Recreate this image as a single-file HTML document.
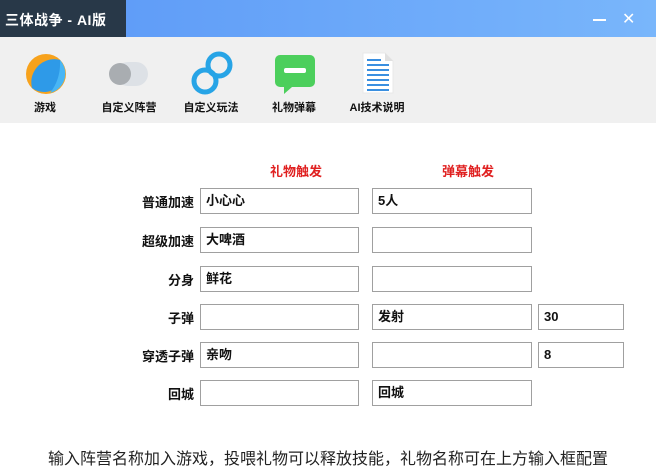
<!DOCTYPE html>
<html><head><meta charset="utf-8"><style>
*{margin:0;padding:0;box-sizing:border-box}
body{width:656px;height:475px;overflow:hidden;background:#fff;font-family:"Liberation Sans","Noto Sans CJK SC",sans-serif;position:relative;color:#111}
.tb{position:absolute;left:0;top:0;width:656px;height:37px;background:linear-gradient(90deg,#5a97f7,#79b6fb)}
.tt{position:absolute;left:0;top:0;width:126px;height:37px;background:#283848;color:#fff;font-weight:bold;font-size:14px;line-height:40px;padding-left:5px;letter-spacing:0.5px}
.tool{position:absolute;left:0;top:37px;width:656px;height:86px;background:#f0f0f0}
.ic{position:absolute;top:14px}
.lb{position:absolute;top:62px;font-size:11px;font-weight:bold;width:90px;text-align:center}
.a{position:absolute;font-size:13px;font-weight:bold}
.in{position:absolute;height:26px;border:1px solid #a0a0a0;background:#fff;font-size:13px;font-weight:bold;line-height:24px;padding-left:5px}
.red{position:absolute;color:#e02020;font-size:13px;font-weight:bold;top:161px}
</style></head><body>
<div class="tb"></div>
<div class="tt">三体战争 - AI版</div>
<div style="position:absolute;left:593px;top:19px;width:13px;height:1.5px;background:#fff"></div>
<div style="position:absolute;left:622px;top:9px;color:#fff;font-size:16px">✕</div>
<div class="tool">
<svg class="ic" style="left:25px;top:16px" width="42" height="42" viewBox="0 0 42 42"><circle cx="21" cy="21" r="20" fill="#f7a21c"/><path d="M35 7A20 20 0 0 1 7 35Q4 22 14 12Q24 4 35 7Z" fill="#2e9ae8"/><path d="M35 7A20 20 0 0 1 25 40Q36 26 35 7Z" fill="#48b6f5"/></svg>
<svg class="ic" style="left:108px;top:24px" width="42" height="26" viewBox="0 0 42 26"><rect x="8" y="1" width="32" height="24" rx="12" fill="#dde1e6"/><circle cx="12" cy="13" r="11" fill="#a9adb1"/></svg>
<svg class="ic" style="left:190px;top:14px" width="44" height="44" viewBox="0 0 44 44"><g fill="none" stroke="#27a4e6" stroke-width="5"><rect x="18" y="3" width="22" height="22" rx="11" transform="rotate(-45 29 14)"/><rect x="4" y="19" width="22" height="22" rx="11" transform="rotate(-45 15 30)"/></g></svg>
<svg class="ic" style="left:274px;top:16px" width="42" height="42" viewBox="0 0 42 42"><path d="M6 2h30a5 5 0 0 1 5 5v22a5 5 0 0 1-5 5H18l-8 7v-7H6a5 5 0 0 1-5-5V7a5 5 0 0 1 5-5z" fill="#4ccf5c"/><rect x="10" y="15" width="22" height="5" rx="2" fill="#fff"/></svg>
<svg class="ic" style="left:362px;top:15px" width="32" height="42" viewBox="0 0 32 42"><path d="M1 1h22l8 8v32H1z" fill="#fff" stroke="#e8e8e8"/><path d="M23 1v8h8" fill="#e0e0e0"/><g stroke="#3a8fe0" stroke-width="2"><path d="M5 8h14M5 13h22M5 18h22M5 23h22M5 28h22M5 33h22M5 38h22"/></g></svg>
<div class="lb" style="left:0px">游戏</div>
<div class="lb" style="left:84px">自定义阵营</div>
<div class="lb" style="left:166px">自定义玩法</div>
<div class="lb" style="left:249px">礼物弹幕</div>
<div class="lb" style="left:332px">AI技术说明</div>
</div>
<div class="red" style="left:270px">礼物触发</div>
<div class="red" style="left:442px">弹幕触发</div>

<div class="a" style="right:462px;top:192px">普通加速</div>
<div class="in" style="left:200px;top:188px;width:159px">小心心</div>
<div class="in" style="left:372px;top:188px;width:160px">5人</div>

<div class="a" style="right:462px;top:231px">超级加速</div>
<div class="in" style="left:200px;top:227px;width:159px">大啤酒</div>
<div class="in" style="left:372px;top:227px;width:160px"></div>

<div class="a" style="right:462px;top:270px">分身</div>
<div class="in" style="left:200px;top:266px;width:159px">鲜花</div>
<div class="in" style="left:372px;top:266px;width:160px"></div>

<div class="a" style="right:462px;top:308px">子弹</div>
<div class="in" style="left:200px;top:304px;width:159px"></div>
<div class="in" style="left:372px;top:304px;width:160px">发射</div>
<div class="in" style="left:538px;top:304px;width:86px">30</div>

<div class="a" style="right:462px;top:346px">穿透子弹</div>
<div class="in" style="left:200px;top:342px;width:159px">亲吻</div>
<div class="in" style="left:372px;top:342px;width:160px"></div>
<div class="in" style="left:538px;top:342px;width:86px">8</div>

<div class="a" style="right:462px;top:384px">回城</div>
<div class="in" style="left:200px;top:380px;width:159px"></div>
<div class="in" style="left:372px;top:380px;width:160px">回城</div>

<div style="position:absolute;left:0;width:656px;top:445px;text-align:center;font-size:16px;color:#222;letter-spacing:0">输入阵营名称加入游戏，投喂礼物可以释放技能，礼物名称可在上方输入框配置</div>
</body></html>
